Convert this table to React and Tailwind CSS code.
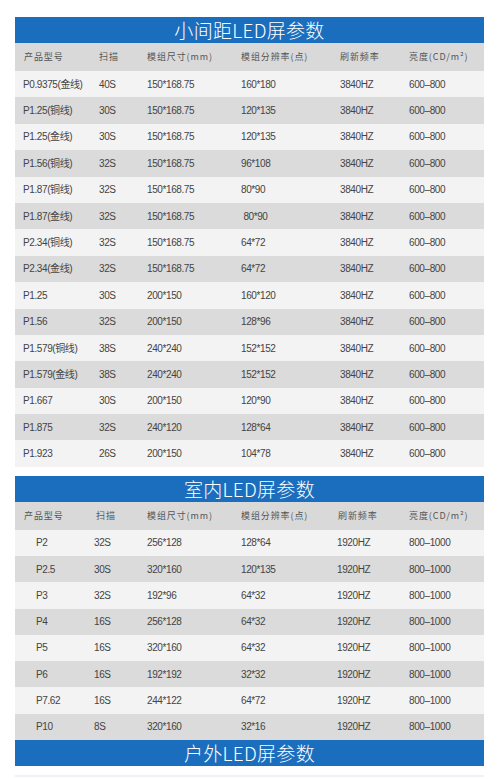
const FONT = { fontFamily: '"Liberation Sans", Arial, "Noto Sans CJK SC", sans-serif' };

const smallPitch = [
  ["P0.9375(金线)", "40S", "150*168.75", "160*180", "3840HZ", "600–800"],
  ["P1.25(铜线)", "30S", "150*168.75", "120*135", "3840HZ", "600–800"],
  ["P1.25(金线)", "30S", "150*168.75", "120*135", "3840HZ", "600–800"],
  ["P1.56(铜线)", "32S", "150*168.75", "96*108", "3840HZ", "600–800"],
  ["P1.87(铜线)", "32S", "150*168.75", "80*90", "3840HZ", "600–800"],
  ["P1.87(金线)", "32S", "150*168.75", " 80*90", "3840HZ", "600–800"],
  ["P2.34(铜线)", "32S", "150*168.75", "64*72", "3840HZ", "600–800"],
  ["P2.34(金线)", "32S", "150*168.75", "64*72", "3840HZ", "600–800"],
  ["P1.25", "30S", "200*150", "160*120", "3840HZ", "600–800"],
  ["P1.56", "32S", "200*150", "128*96", "3840HZ", "600–800"],
  ["P1.579(铜线)", "38S", "240*240", "152*152", "3840HZ", "600–800"],
  ["P1.579(金线)", "38S", "240*240", "152*152", "3840HZ", "600–800"],
  ["P1.667", "30S", "200*150", "120*90", "3840HZ", "600–800"],
  ["P1.875", "32S", "240*120", "128*64", "3840HZ", "600–800"],
  ["P1.923", "26S", "200*150", "104*78", "3840HZ", "600–800"],
];

const indoor = [
  ["P2", "32S", "256*128", "128*64", "1920HZ", "800–1000"],
  ["P2.5", "30S", "320*160", "120*135", "1920HZ", "800–1000"],
  ["P3", "32S", "192*96", "64*32", "1920HZ", "800–1000"],
  ["P4", "16S", "256*128", "64*32", "1920HZ", "800–1000"],
  ["P5", "16S", "320*160", "64*32", "1920HZ", "800–1000"],
  ["P6", "16S", "192*192", "32*32", "1920HZ", "800–1000"],
  ["P7.62", "16S", "244*122", "64*72", "1920HZ", "800–1000"],
  ["P10", "8S", "320*160", "32*16", "1920HZ", "800–1000"],
];

const headers = ["产品型号", "扫描", "模组尺寸(mm)", "模组分辨率(点)", "刷新频率", "亮度(CD/m²)"];

function Title({ text }) {
  return (
    <div
      className="bg-[#1b6ebd] text-white text-center text-[19px] font-light h-[26px] leading-[26px] tracking-[0.3px]"
      style={{ fontFamily: '"Noto Sans CJK SC", "Noto Sans", sans-serif' }}
    >
      {text}
    </div>
  );
}

function Section({ title, rows, cols, headCols, rowH, indent }) {
  return (
    <div>
      <Title text={title} />
      <div className={`grid ${headCols} items-center h-[28px] bg-[#d9d9d9] pl-[9px] text-[9px] tracking-[0.9px] text-[#555]`}>
        {headers.map((h) => (
          <span key={h} className="whitespace-nowrap" style={{ fontFamily: '"Noto Sans CJK SC", sans-serif' }}>
            {h}
          </span>
        ))}
      </div>
      {rows.map((r, i) => (
        <div
          key={r[0]}
          className={`grid ${cols} items-center ${rowH} pl-[8px] text-[10px] tracking-[-0.4px] text-[#444] ${
            i % 2 === 0 ? "bg-[#f3f3f3]" : "bg-[#dbdbdb]"
          }`}
          style={FONT}
        >
          {r.map((c, j) => (
            <span key={j} className={`whitespace-pre ${j === 0 ? indent : ""}`}>
              {c}
            </span>
          ))}
        </div>
      ))}
    </div>
  );
}

export default function App() {
  return (
    <div className="bg-white w-[500px] h-[779px] overflow-hidden pt-[17px]">
      <div className="ml-[15px] w-[469px]">
        <Section
          title="小间距LED屏参数"
          rows={smallPitch}
          cols="grid-cols-[76px_48px_94px_99px_69px_1fr]"
          headCols="grid-cols-[75px_48px_94px_99px_69px_1fr]"
          rowH="h-[26.4px]"
          indent=""
        />
        <div className="h-[9px]" />
        <Section
          title="室内LED屏参数"
          rows={indoor}
          cols="grid-cols-[71px_53px_94px_96px_72px_1fr]"
          headCols="grid-cols-[72px_51px_94px_97px_71px_1fr]"
          rowH="h-[26.25px]"
          indent="pl-[13px]"
        />
        <Title text="户外LED屏参数" />
        <div className="mt-[9px] h-[2px] bg-[#eef2f6]" />
      </div>
    </div>
  );
}
